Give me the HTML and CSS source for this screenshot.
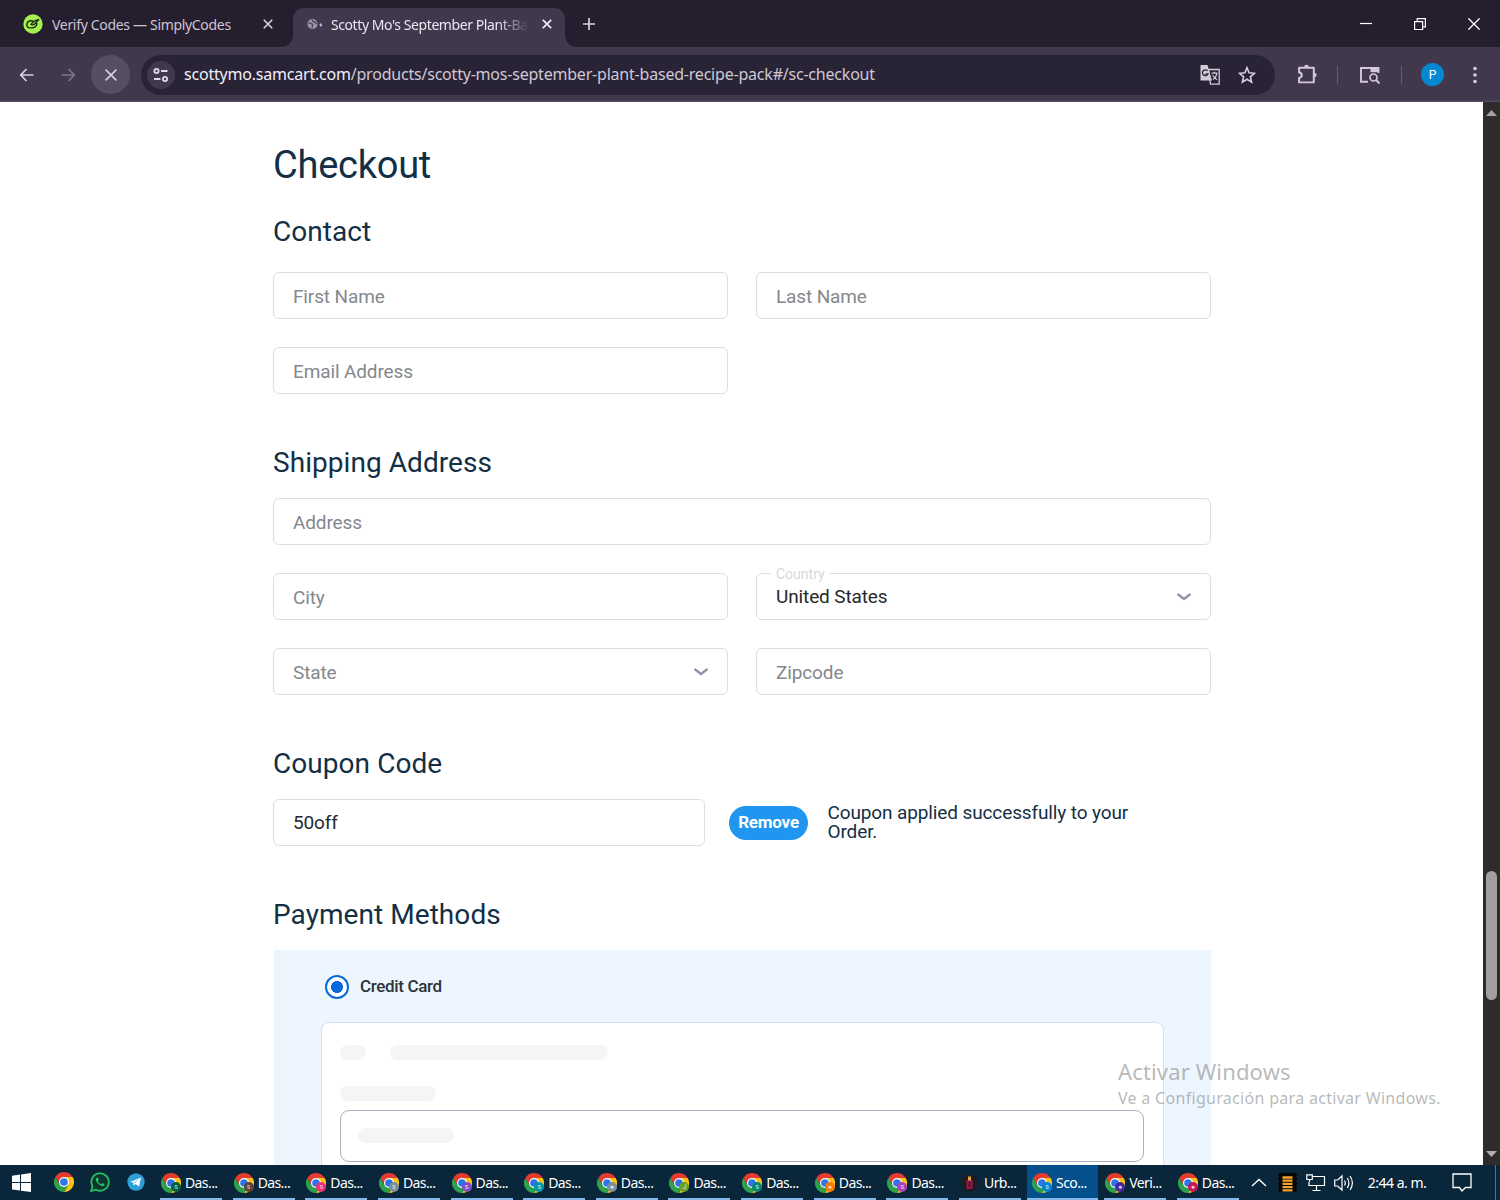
FILE: index.html
```html
<!DOCTYPE html>
<html lang="en">
<head>
<meta charset="utf-8">
<title>Scotty Mo's September Plant-Based Recipe Pack</title>
<link rel="stylesheet" href="styles.css">
</head>
<body>
<svg class="defs" width="0" height="0" aria-hidden="true">
  <symbol id="chrome" viewBox="0 0 24 24">
    <path fill="#e33b2e" d="M12 6H22.4A12 12 0 0 0 1.6 6L6.8 15 12 12z"/>
    <path fill="#fbc116" d="M22.4 6A12 12 0 0 1 12 24L17.2 15 12 6z"/>
    <path fill="#2da14c" d="M12 24A12 12 0 0 1 1.6 6L6.8 15H17.2z"/>
    <circle cx="12" cy="12" r="6" fill="#fff"/><circle cx="12" cy="12" r="4.6" fill="#2f74e8"/>
  </symbol>
  <symbol id="chevron" viewBox="0 0 16 10"><path d="M1.5 2 8 7 14.500 2" fill="none" stroke="#8b93a5" stroke-width="2.300"/></symbol>
</svg>

<header class="tabstrip">
  <div class="tab tab-idle">
    <svg class="favicon" viewBox="0 0 20 20"><circle cx="10" cy="10" r="9.700" fill="#a4f04e"/><path d="M10.500 7.200C8 6.200 4.800 7 4 9.500c-.6 2 .2 3.800 2 4.200 2.500.4 5.200.2 6.600-1.200 1-1 1.300-2.300 1.200-3.500M16 5.300c-2.500.8-6.500 2.700-8 5 1.500 1 3 .6 4.200-.8L16 5.300" fill="none" stroke="#1c2b12" stroke-width="1.400"/></svg>
    <span class="tab-title idle-title">Verify Codes — SimplyCodes</span>
    <svg class="tab-close" viewBox="0 0 10 10"><path d="M.8.8l8.400 8.400M9.200.8.8 9.200" stroke="#dcd4e2" stroke-width="1.600"/></svg>
  </div>
  <div class="tab tab-active">
    <svg class="globe" viewBox="0 0 16 12"><circle cx="5.500" cy="6" r="5" fill="#9d9aa5"/><path d="M1.500 5l3 .5 1.200 1.500-.7 3M5 1.500 6 3.500l2 .5 1.500 2.200" fill="none" stroke="#51495d" stroke-width="1.500"/><ellipse cx="13.800" cy="7" rx="1.200" ry="1.700" fill="#c5afea"/></svg>
    <span class="tab-title active-title">Scotty Mo's September Plant-Ba</span>
    <svg class="tab-close" viewBox="0 0 10 10"><path d="M.8.8l8.400 8.400M9.200.8.8 9.200" stroke="#f0eaf4" stroke-width="1.700"/></svg>
  </div>
  <svg class="new-tab" viewBox="0 0 12 12"><path d="M6 0v12M0 6h12" stroke="#d9d1df" stroke-width="1.700"/></svg>
  <div class="window-controls">
    <svg width="12" height="12" viewBox="0 0 12 12"><path d="M0 5.500h12" stroke="#fff" stroke-width="1.200"/></svg>
    <svg width="12" height="12" viewBox="0 0 12 12"><path d="M.6 3.600h8v8h-8zM3.200 3.500V.6h8.200v8.200H8.700" fill="none" stroke="#fff" stroke-width="1.200"/></svg>
    <svg width="12" height="12" viewBox="0 0 12 12"><path d="M.4.4l11.200 11.200M11.600.4.4 11.600" stroke="#fff" stroke-width="1.300"/></svg>
  </div>
</header>

<nav class="toolbar">
  <svg class="nav-arrow" viewBox="0 0 14 14"><path d="M14 7H1.500M7 1 1.200 7 7 13" fill="none" stroke="#d8d0de" stroke-width="1.700"/></svg>
  <svg class="nav-arrow" viewBox="0 0 14 14"><path d="M0 7h12.500M7 1l5.800 6L7 13" fill="none" stroke="#7e7588" stroke-width="1.700"/></svg>
  <span class="stop"><svg width="12" height="12" viewBox="0 0 12 12"><path d="M.6.6l10.800 10.800M11.400.6.6 11.400" stroke="#d8d0de" stroke-width="1.600"/></svg></span>
  <div class="omnibox">
    <span class="site-info"><svg width="16" height="14" viewBox="0 0 16 14"><g fill="none" stroke="#e2dbe6" stroke-width="1.800"><circle cx="3.500" cy="3" r="2.100"/><path d="M8 3h6.500M1 11h6.500"/><circle cx="12" cy="11" r="2.100"/></g></svg></span>
    <span class="url"><b>scottymo.samcart.com</b>/products/scotty-mos-september-plant-based-recipe-pack#/sc-checkout</span>
    <svg class="translate" viewBox="0 0 20 20"><path d="M8.500 4.500h10.700v14.700h-8.700z" fill="none" stroke="#d2cad6" stroke-width="1.300"/><path d="M.5 0h7l4.500 15.500H.5z" fill="#d2cad6"/><path d="M7.600 5.800A2.900 2.900 0 1 0 8 9H5.500" fill="none" stroke="#292336" stroke-width="1.300"/><path d="M11.500 8.200h6M14.500 6.800v1.400M17 8.500c-.7 3-2.500 5-4 6M12.500 10c1.200 2 3 3.800 4.500 4.800" fill="none" stroke="#d2cad6" stroke-width="1.200"/></svg>
    <svg class="star" viewBox="0 0 18 18"><path d="M9 1.800l2.100 5 5.300.5-4 3.500 1.200 5.300L9 13.300l-4.600 2.800 1.200-5.300-4-3.500 5.300-.5z" fill="none" stroke="#d8d0de" stroke-width="1.600"/></svg>
  </div>
  <div class="tools">
    <svg class="puzzle" viewBox="0 0 20 20"><path d="M2 3.500h14v14H2v-4.300a2.500 2.500 0 0 0 0-5z" fill="none" stroke="#d2c8d8" stroke-width="1.900" stroke-linejoin="round"/><path d="M6.800 3a2.200 2.200 0 0 1 4.400 0zM16.500 8.300a2.200 2.200 0 0 1 0 4.400z" fill="#d2c8d8"/></svg>
    <i class="divider"></i>
    <svg class="side-search" viewBox="0 0 22 18"><path d="M9 15.800H2V2h17.500v5" fill="none" stroke="#d2c8d8" stroke-width="1.900"/><path d="M11.500 1H20v5.200h-8.500z" fill="#d2c8d8"/><circle cx="14.500" cy="11.500" r="3.500" fill="none" stroke="#d2c8d8" stroke-width="1.700"/><path d="M17 14l3.500 3.500" stroke="#d2c8d8" stroke-width="1.900"/></svg>
    <i class="divider second"></i>
    <span class="avatar">P</span>
    <svg class="kebab" viewBox="0 0 4 18"><g fill="#d8d0de"><circle cx="2" cy="2.500" r="1.800"/><circle cx="2" cy="9" r="1.800"/><circle cx="2" cy="15.500" r="1.800"/></g></svg>
  </div>
</nav>

<div class="viewport">
  <main class="page">
    <h1>Checkout</h1>
    <section class="contact">
      <h2>Contact</h2>
      <div class="fields">
        <div class="field"><span>First Name</span></div>
        <div class="field"><span>Last Name</span></div>
        <div class="field"><span>Email Address</span></div>
      </div>
    </section>
    <section class="shipping">
      <h2>Shipping Address</h2>
      <div class="fields">
        <div class="field wide"><span>Address</span></div>
        <div class="field"><span>City</span></div>
        <div class="field filled country"><label>Country</label><span>United States</span><svg class="caret"><use href="#chevron"/></svg></div>
        <div class="field"><span>State</span><svg class="caret"><use href="#chevron"/></svg></div>
        <div class="field"><span>Zipcode</span></div>
      </div>
    </section>
    <section class="coupon">
      <h2>Coupon Code</h2>
      <div class="coupon-row">
        <div class="field filled"><span>50off</span></div>
        <button class="remove">Remove</button>
        <p>Coupon applied successfully to your Order.</p>
      </div>
    </section>
    <section class="payment">
      <h2>Payment Methods</h2>
      <div class="pay-panel">
        <div class="method"><span class="radio"></span><span class="method-name">Credit Card</span></div>
        <div class="card-form">
          <div class="skeleton-row"><i class="skeleton tiny"></i><i class="skeleton long"></i></div>
          <i class="skeleton"></i>
          <div class="card-input"><i class="skeleton"></i></div>
        </div>
      </div>
    </section>
  </main>
  <aside class="scrollbar">
    <svg class="sb-up" viewBox="0 0 11 6"><path d="M0 6 5.500 0 11 6z" fill="#a3a3a3"/></svg>
    <span class="thumb"></span>
    <svg class="sb-down" viewBox="0 0 11 6"><path d="M0 0l5.500 6L11 0z" fill="#b0b0b0"/></svg>
  </aside>
  <div class="watermark"><div class="wm-title">Activar Windows</div><div class="wm-text">Ve a Configuración para activar Windows.</div></div>
</div>

<footer class="taskbar">
  <svg class="start" viewBox="0 0 19 19"><path d="M0 2.700 8 1.500V9H0zM9 1.400 19 0v9H9zM0 10h8v7.600L0 16.400zM9 10h10v9L9 17.700z" fill="#fff"/></svg>
  <svg class="pin"><use href="#chrome"/></svg>
  <svg class="pin" viewBox="0 0 20 20"><path d="M1.200 19l1.300-4.700A8.700 8.700 0 1 1 6 17.700z" fill="#0b3432" stroke="#27c063" stroke-width="1.800"/><path d="M7 5.500c-2 1-1.300 4 1.200 6.300 2.300 2.300 5 3.300 6.100 1.500l.2-1-2.200-1.200-1.200 1.200c-1.500-.6-2.500-1.600-3.200-3l1-1.200-1-2.400z" fill="#27c063"/></svg>
  <svg class="pin telegram" viewBox="0 0 20 20"><circle cx="10" cy="10" r="8.700" fill="#2da0d8"/><path d="M4 10l11-4.500-2 9-3.500-2.500-2 1.500-.5-3z" fill="#fff"/><path d="M7 10.500l5.500-3-4 4.500" fill="#a9d5ee"/></svg>
  <div class="tasks">
    <div class="task"><svg class="app"><use href="#chrome"/></svg><i class="badge green">s</i><span>Das...</span></div>
    <div class="task"><svg class="app"><use href="#chrome"/></svg><i class="badge brown">s</i><span>Das...</span></div>
    <div class="task"><svg class="app"><use href="#chrome"/></svg><i class="badge pink">s</i><span>Das...</span></div>
    <div class="task"><svg class="app"><use href="#chrome"/></svg><i class="badge slate">s</i><span>Das...</span></div>
    <div class="task"><svg class="app"><use href="#chrome"/></svg><i class="badge violet">s</i><span>Das...</span></div>
    <div class="task"><svg class="app"><use href="#chrome"/></svg><i class="badge cyan">s</i><span>Das...</span></div>
    <div class="task"><svg class="app"><use href="#chrome"/></svg><i class="badge slate">●</i><span>Das...</span></div>
    <div class="task"><svg class="app"><use href="#chrome"/></svg><i class="badge lime">J</i><span>Das...</span></div>
    <div class="task"><svg class="app"><use href="#chrome"/></svg><i class="badge teal">s</i><span>Das...</span></div>
    <div class="task"><svg class="app"><use href="#chrome"/></svg><i class="badge orange">●</i><span>Das...</span></div>
    <div class="task"><svg class="app"><use href="#chrome"/></svg><i class="badge magenta">s</i><span>Das...</span></div>
    <div class="task"><svg class="app" viewBox="0 0 20 20"><circle cx="10" cy="10" r="8.500" fill="#201b21"/><path d="M6.500 7h6v9h-6z" fill="#a3124d"/><path d="M8 3.500h3v4H8z" fill="#e4a33b"/><path d="M8.500 9h2v5h-2z" fill="#4a1534"/></svg><span>Urb...</span></div>
    <div class="task current"><svg class="app"><use href="#chrome"/></svg><i class="badge blue">s</i><span>Sco...</span></div>
    <div class="task"><svg class="app"><use href="#chrome"/></svg><i class="badge indigo">●</i><span>Veri...</span></div>
    <div class="task"><svg class="app"><use href="#chrome"/></svg><i class="badge crimson">●</i><span>Das...</span></div>
  </div>
  <div class="tray">
    <svg width="16" height="9" viewBox="0 0 16 9"><path d="M1 8l7-6.500L15 8" fill="none" stroke="#fff" stroke-width="1.400"/></svg>
    <svg class="film" width="19" height="19" viewBox="0 0 19 19"><path d="M1 0h17v19H1z" fill="#080808"/><path d="M0 2h19M0 6h19M0 10h19M0 14h19M0 17.500h19" stroke="#080808" stroke-width="2"/><path d="M4.500 4.500h10M4.500 7.700h10M4.500 10.900h10M4.500 14.100h10M4.500 17.300h10" stroke="#f0a431" stroke-width="2.300"/></svg>
    <svg class="network" width="20" height="18" viewBox="0 0 20 18"><path d="M6 2.500h12.500v9H3V8M10.500 12v4M6.500 16.500h8M.8.800h5.500v4.700H.8zM3.500 5.500V8" fill="none" stroke="#fff" stroke-width="1.200"/></svg>
    <svg class="volume" width="20" height="18" viewBox="0 0 20 18"><path d="M.7 6h3L8 2v14l-4.300-4h-3zM10.500 6.500q1.600 2.500 0 5M13.300 4q3.200 5 0 10M16 2q4.800 7 0 14" fill="none" stroke="#fff" stroke-width="1.200"/></svg>
    <span class="clock">2:44 a. m.</span>
    <svg class="notice" width="20" height="19" viewBox="0 0 20 19"><path d="M1 1h18v13.500h-5.500L10 18l-2.500-3.500H1z" fill="none" stroke="#fff" stroke-width="1.300"/></svg>
    <i class="peek"></i>
  </div>
</footer>
</body>
</html>
```
FILE: styles.css
```css
* { box-sizing: border-box; }
body { margin: 0; width: 1500px; height: 1200px; overflow: hidden; display: flex; flex-direction: column; font-family: Roboto, "Liberation Sans", sans-serif; background: #fff; }
svg { display: block; flex: none; }
.defs { position: absolute; }

/* Tab strip */
.tabstrip { height: 47px; flex: none; display: flex; align-items: flex-end; background: #251e2f; font-family: "Noto Sans", "Open Sans", sans-serif; }
.tab { height: 39px; display: flex; align-items: center; padding-bottom: 7px; }
.tab-idle { width: 293px; padding-left: 23px; }
.favicon { width: 20px; height: 20px; }
.tab-title { font-size: 14px; line-height: 20px; white-space: nowrap; }
.idle-title { width: 202px; margin: 2px 9px 0; color: #cdc5d4; letter-spacing: -0.32px; }
.tab-close { width: 10px; height: 10px; }
.tab-active { position: relative; width: 272px; padding-left: 14px; background: #42384d; border-radius: 11px 11px 0 0; }
.tab-active::before, .tab-active::after { content: ""; position: absolute; bottom: 0; width: 11px; height: 11px; }
.tab-active::before { left: -11px; background: radial-gradient(circle at 0 0, #251e2f 10.5px, #42384d 11px); }
.tab-active::after { right: -11px; background: radial-gradient(circle at 100% 0, #251e2f 10.5px, #42384d 11px); }
.globe { width: 16px; height: 12px; }
.active-title { width: 198px; margin: 2px 13px 0 8px; color: #ece6f0; letter-spacing: -0.42px; -webkit-mask-image: linear-gradient(90deg, #000 84%, transparent 100%); mask-image: linear-gradient(90deg, #000 84%, transparent 100%); }
.new-tab { width: 12px; height: 12px; margin: 0 0 17px 18px; }
.window-controls { display: flex; gap: 42px; margin: 0 20.5px 17px auto; }

/* Toolbar */
.toolbar { height: 55px; flex: none; display: flex; align-items: center; padding-left: 19px; background: linear-gradient(#42384d 53px, #5b5364 55px); font-family: "Noto Sans", "Open Sans", sans-serif; }
.nav-arrow { width: 15px; height: 14px; margin-right: 27px; }
.nav-arrow + .nav-arrow { margin-right: 15px; }
.stop { width: 39px; height: 39px; border-radius: 50%; background: #574e61; display: grid; place-items: center; }
.omnibox { width: 1134px; height: 40px; margin-left: 11px; display: flex; align-items: center; padding-left: 6px; border-radius: 20px; background: #292336; }
.site-info { width: 28px; height: 28px; border-radius: 50%; background: #42384d; display: grid; place-items: center; }
.url { width: 1016px; margin: -1px 0 0 9px; font-size: 16px; line-height: 24px; letter-spacing: -0.21px; white-space: nowrap; color: #cfc8d5; }
.url b { font-weight: 400; color: #f4eff7; }
.translate { width: 20px; height: 20px; }
.star { width: 18px; height: 18px; margin-left: 18px; }
.tools { display: flex; align-items: center; margin-left: 22px; }
.puzzle { width: 21px; height: 21px; }
.divider { width: 1px; height: 18px; margin: 0 21px 0 19px; background: #685d72; }
.side-search { width: 22px; height: 18px; }
.second { margin: 0 19px 0 20px; }
.avatar { width: 23px; height: 23px; border-radius: 50%; background: #0588d1; color: #fff; font: 12px/24px Roboto, sans-serif; text-align: center; }
.kebab { width: 4px; height: 18px; margin-left: 29px; }

/* Page */
.viewport { position: relative; height: 1063px; flex: none; display: flex; overflow: hidden; }
.page { width: 1483px; height: 1063px; overflow: hidden; padding: 37px 272px 0 273px; color: #132f45; }
h1, h2 { margin: 0; font-weight: 400; }
h1 { font-size: 38px; line-height: 52px; letter-spacing: -0.25px; }
h2 { font-size: 28px; line-height: 36px; letter-spacing: 0.06px; }
.contact { padding-top: 23px; }
.contact .fields { margin-top: 22px; }
.fields { display: grid; grid-template-columns: 455px 455px; gap: 28px; }
.field { position: relative; height: 47px; display: flex; align-items: center; justify-content: space-between; padding: 0 18px 0 19px; border: 1px solid #dcdee0; border-radius: 6px; background: #fff; font-size: 19px; line-height: 22px; letter-spacing: -0.13px; color: #84888d; }
.field span { padding-top: 2px; }
.wide { grid-column: 1 / -1; }
.filled { color: #26282c; }
.filled span { padding-top: 1px; }
.country label { position: absolute; left: 14px; top: -9px; padding: 0 5px; background: #fff; font-size: 14px; line-height: 19px; letter-spacing: 0; color: #d6d8db; }
.caret { width: 16px; height: 10px; }
.shipping, .coupon, .payment { padding-top: 51px; }
.shipping .fields { margin-top: 17px; }
.coupon-row { display: flex; align-items: center; margin-top: 17px; }
.coupon-row .field { width: 432px; margin-right: 24px; }
.remove { width: 79px; height: 34px; padding: 0 0 1px; border: 0; border-radius: 17px; background: #2196f0; color: #fff; font: 700 17px/20px Roboto, sans-serif; letter-spacing: -0.2px; }
.coupon-row p { width: 330px; margin: -1px 0 0 19.5px; font-size: 19px; line-height: 19px; letter-spacing: -0.12px; }
.pay-panel { height: 220px; margin: 17px 0 0 1px; padding: 25px 47px 0; background: #edf5fe; }
.method { display: flex; align-items: center; height: 24px; padding-left: 4px; }
.radio { width: 24px; height: 24px; border: 2px solid #0969da; border-radius: 50%; background: radial-gradient(circle, #0969da 5.7px, #fff 6.2px); }
.method-name { margin: -2px 0 0 11px; font-size: 17px; font-weight: 500; line-height: 22px; letter-spacing: -0.35px; color: #2d3338; }
.card-form { height: 180px; margin-top: 23px; padding: 22px 19px 0 18px; border: 1px solid #d9e2ec; border-radius: 8px; background: #fff; }
.skeleton { display: block; width: 96px; height: 15px; border-radius: 8px; background: #f5f5f5; }
.skeleton-row { display: flex; gap: 24px; margin-bottom: 26px; }
.tiny { width: 26px; }
.long { width: 218px; }
.card-input { height: 52px; margin-top: 9px; padding: 17px; border: 1px solid #a9b1bf; border-radius: 9px; }
.scrollbar { width: 17px; display: flex; flex-direction: column; align-items: center; padding: 8px 0; background: #2c2c2c; }
.sb-up, .sb-down { width: 11px; height: 6px; }
.thumb { width: 11px; height: 129px; margin-top: 755px; border-radius: 6px; background: #9f9f9f; }
.sb-down { margin-top: auto; }
.watermark { position: absolute; left: 1118px; top: 953px; font-family: "Noto Sans", "Open Sans", sans-serif; color: rgba(140, 140, 140, .62); white-space: nowrap; }
.wm-title { font-size: 22px; line-height: 32px; letter-spacing: 0.15px; }
.wm-text { font-size: 16px; line-height: 22px; letter-spacing: 0.3px; }

/* Windows taskbar */
.taskbar { height: 35px; flex: none; display: flex; align-items: center; padding-left: 12px; background: #09263a; color: #fff; font-family: "Noto Sans", "Open Sans", sans-serif; }
.start { width: 19px; height: 19px; margin-right: 23px; }
.pin { width: 20px; height: 20px; margin: 0 16px 1px 0; }
.telegram { margin-right: 14px; }
.tasks { display: flex; gap: 10.65px; height: 35px; }
.task { position: relative; width: 62px; height: 35px; display: flex; align-items: center; padding: 2px 0 0 1px; border-bottom: 2px solid #83b9ea; }
.task span { margin-left: 4px; font-size: 14px; line-height: 20px; letter-spacing: -0.6px; }
.task .app { width: 20px; height: 20px; }
.badge { position: absolute; left: 11px; top: 17px; width: 10px; height: 10px; border-radius: 50%; font: 7px/10px Roboto, sans-serif; text-align: center; color: #ffffffcc; }
.green { background: #075e42; } .brown { background: #5d4037; } .pink { background: #ec2f78; }
.slate { background: #78909c; } .violet { background: #7e50c0; } .cyan { background: #0097a7; }
.lime { background: #689f28; } .teal { background: #00877a; } .orange { background: #f57c00; }
.magenta { background: #aa43bb; } .blue { background: #0288d1; } .indigo { background: #4527a0; } .crimson { background: #c2185b; }
.current { width: 71px; margin: 0 -4.6px; padding-left: 5px; background: #04508c; }
.current .badge { left: 15px; }
.tray { display: flex; align-items: center; margin-left: 12px; }
.film { margin-left: 11px; }
.network { margin-left: 9px; }
.volume { margin-left: 8px; }
.clock { width: 62px; margin-left: 14px; font-size: 14px; line-height: 20px; letter-spacing: -0.5px; white-space: nowrap; }
.notice { margin-left: 22px; }
.peek { width: 1px; height: 35px; margin-left: 23px; background: #5b707e; }
```
